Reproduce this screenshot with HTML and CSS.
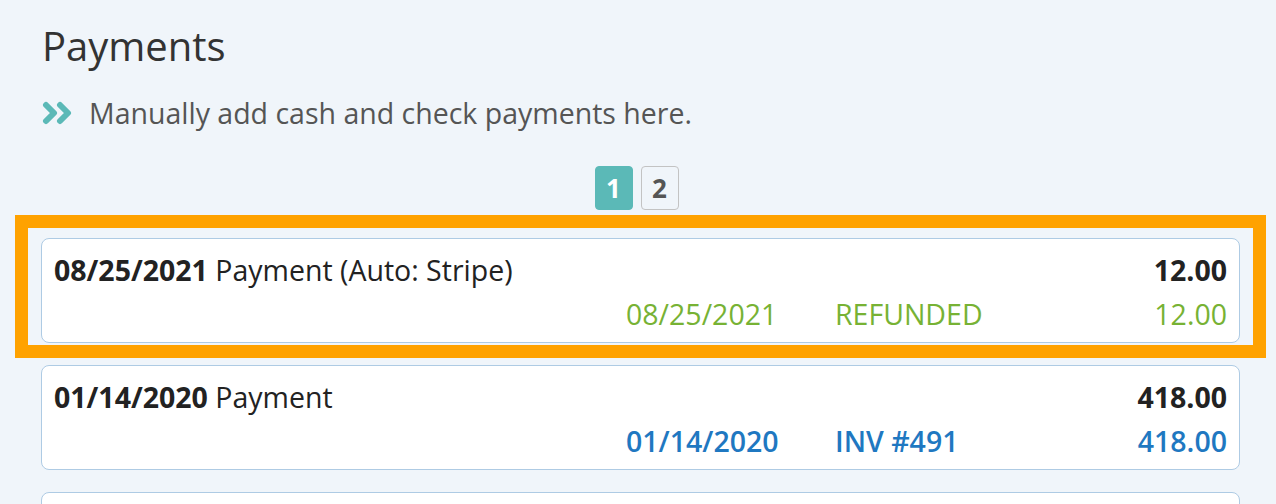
FILE: index.html
```html
<!DOCTYPE html>
<html>
<head>
<meta charset="utf-8">
<link rel="stylesheet" href="styles.css">
</head>
<body>
<div class="page">
  <h1 class="title">Payments</h1>
  <p class="hint">
    <svg class="chev" width="30" height="24" viewBox="0 0 30 24"><polyline points="4,4 12,12 4,20" fill="none" stroke="#5bb9b7" stroke-width="6" stroke-linecap="round" stroke-linejoin="round"/><polyline points="18,4 26,12 18,20" fill="none" stroke="#5bb9b7" stroke-width="6" stroke-linecap="round" stroke-linejoin="round"/></svg>
    <span>Manually add cash and check payments here.</span>
  </p>
  <div class="pager">
    <span class="pg active">1</span>
    <span class="pg">2</span>
  </div>
  <div class="list">
    <div class="card highlighted">
      <div class="r1"><span><b>08/25/2021</b> Payment (Auto: Stripe)</span><b>12.00</b></div>
      <div class="r2 green"><span class="d">08/25/2021</span><span class="s">REFUNDED</span><span class="a">12.00</span></div>
      <div class="hl"></div>
    </div>
    <div class="card">
      <div class="r1"><span><b>01/14/2020</b> Payment</span><b>418.00</b></div>
      <div class="r2 blue"><span class="d">01/14/2020</span><span class="s">INV #491</span><span class="a">418.00</span></div>
    </div>
    <div class="card">
      <div class="r1"><span>&nbsp;</span></div>
      <div class="r2"><span>&nbsp;</span></div>
    </div>
  </div>
</div>
</body>
</html>
```
FILE: styles.css
```css
html, body {
  margin: 0;
  padding: 0;
  background: #f0f5fa;
  font-family: "Open Sans", "Liberation Sans", sans-serif;
  overflow: hidden;
  height: 504px;
}
.page {
  padding: 18px 36px 0 41px;
}
.title {
  margin: 0 0 0 1px;
  font-size: 40px;
  line-height: 56px;
  font-weight: 400;
  color: #333;
}
.hint {
  margin: 19px 0 0 1px;
  display: flex;
  align-items: center;
  gap: 17px;
  font-size: 28.5px;
  line-height: 40px;
  color: #555;
}
.chev { display: block; flex: none; }
.pager {
  margin-top: 33px;
  display: flex;
  justify-content: center;
  gap: 8px;
  padding-right: 8px;
}
.pg {
  box-sizing: border-box;
  width: 38px;
  height: 44px;
  border: 1.5px solid #c3c3c3;
  border-radius: 4px;
  display: flex;
  align-items: center;
  justify-content: center;
  font-weight: 700;
  font-size: 26px;
  color: #555;
  background: #f0f5fa;
}
.pg.active {
  background: #5bb9b7;
  border-color: #5bb9b7;
  color: #fff;
}
.list {
  margin-top: 28px;
  display: flex;
  flex-direction: column;
  gap: 22px;
}
.card {
  position: relative;
  background: #fff;
  border: 1.5px solid #aecbe4;
  border-radius: 8px;
  padding: 9px 12px 6px 12px;
  font-size: 28.5px;
  color: #222;
}
.r1, .r2 {
  display: flex;
  line-height: 44px;
  height: 44px;
  white-space: nowrap;
}
.r1 { justify-content: space-between; }
.r1 b { font-weight: 700; }
.r2 { padding-left: 572px; }
.r2 .d { width: 209px; }
.r2 .s { flex: 1; }
.green { color: #77b234; }
.blue { color: #1f78c1; font-weight: 600; }
.hl {
  position: absolute;
  left: -27px;
  right: -27px;
  top: -24px;
  bottom: -16px;
  border: 13px solid #ffa200;
  pointer-events: none;
}
```
